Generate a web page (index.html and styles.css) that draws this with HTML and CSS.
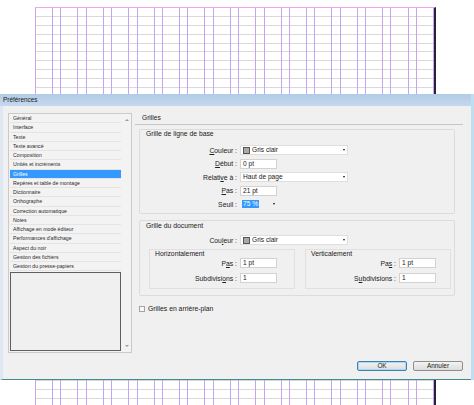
FILE: index.html
```html
<!DOCTYPE html>
<html lang="fr">
<head>
<meta charset="utf-8">
<title>Préférences</title>
<link rel="stylesheet" href="styles.css">
</head>
<body>
<div class="screen">
  <div class="page">
    <div class="col"></div><div class="col"></div><div class="col"></div><div class="col"></div>
    <div class="col"></div><div class="col"></div><div class="col"></div><div class="col"></div>
    <div class="col"></div><div class="col"></div><div class="col"></div><div class="col"></div>
    <div class="col"></div><div class="col"></div><div class="col"></div><div class="col"></div>
  </div>

  <div class="dialog">
    <div class="titlebar">Préférences</div>
    <div class="body">
      <div class="main">
        <div class="list">
          <div class="items">
            <div class="item">Général</div>
            <div class="item">Interface</div>
            <div class="item">Texte</div>
            <div class="item">Texte avancé</div>
            <div class="item">Composition</div>
            <div class="item">Unités et incréments</div>
            <div class="item sel">Grilles</div>
            <div class="item">Repères et table de montage</div>
            <div class="item">Dictionnaire</div>
            <div class="item">Orthographe</div>
            <div class="item">Correction automatique</div>
            <div class="item">Notes</div>
            <div class="item">Affichage en mode éditeur</div>
            <div class="item">Performances d'affichage</div>
            <div class="item">Aspect du noir</div>
            <div class="item">Gestion des fichiers</div>
            <div class="item">Gestion du presse-papiers</div>
            <div class="blank"></div>
          </div>
          <div class="scroll"><span class="arr up"></span><span class="arr down"></span></div>
        </div>

        <div class="panel">
          <div class="panel-head">Grilles</div>

          <div class="group g1">
            <div class="group-label">Grille de ligne de base</div>
            <div class="rows">
              <div class="row">
                <span class="lbl"><u>C</u>ouleur :</span>
                <span class="select wide"><span class="swatch"></span>Gris clair<span class="caret"></span></span>
              </div>
              <div class="row">
                <span class="lbl"><u>D</u>ébut :</span>
                <span class="input">0 pt</span>
              </div>
              <div class="row">
                <span class="lbl">Relati<u>v</u>e à :</span>
                <span class="select wide">Haut de page<span class="caret"></span></span>
              </div>
              <div class="row">
                <span class="lbl"><u>P</u>as :</span>
                <span class="input">21 pt</span>
              </div>
              <div class="row">
                <span class="lbl">Seuil :</span>
                <span class="combo"><span class="hl">75 %</span><span class="caret"></span></span>
              </div>
            </div>
          </div>

          <div class="group g2">
            <div class="group-label">Grille du document</div>
            <div class="row first">
              <span class="lbl">Cou<u>l</u>eur :</span>
              <span class="select wide"><span class="swatch"></span>Gris clair<span class="caret"></span></span>
            </div>
            <div class="subs">
              <div class="sub">
                <div class="sub-label">Horizontalement</div>
                <div class="row">
                  <span class="lbl s">P<u>a</u>s :</span>
                  <span class="input">1 pt</span>
                </div>
                <div class="row">
                  <span class="lbl s">Subdivisi<u>o</u>ns :</span>
                  <span class="input">1</span>
                </div>
              </div>
              <div class="sub">
                <div class="sub-label">Verticalement</div>
                <div class="row">
                  <span class="lbl s">Pa<u>s</u> :</span>
                  <span class="input">1 pt</span>
                </div>
                <div class="row">
                  <span class="lbl s">S<u>u</u>bdivisions :</span>
                  <span class="input">1</span>
                </div>
              </div>
            </div>
          </div>

          <div class="check"><span class="box"></span>Grilles en arrière-plan</div>
        </div>
      </div>

      <div class="footer">
        <span class="btn default">OK</span>
        <span class="btn">Annuler</span>
      </div>
    </div>
  </div>
</div>
</body>
</html>
```
FILE: styles.css
```css
html, body {
  margin: 0;
  background: #ffffff;
  font-family: "Liberation Sans", Arial, sans-serif;
  color: #202020;
}

.screen {
  position: relative;
  width: 474px;
  height: 405px;
  overflow: hidden;
  box-sizing: border-box;
  padding: 7px 0 0 35px;
}

/* page with layout grid */
.page {
  width: 401px;
  height: 398px;
  box-sizing: border-box;
  border-top: 1px solid #f2a4f2;
  border-right: 2px solid #2b2238;
  display: flex;
  gap: 7.3px;
  background: repeating-linear-gradient(to bottom, transparent 0 7.89px, #d9d9d9 7.89px 8.89px);
}

.col {
  flex: 1;
  border-left: 1px solid #c2a6f3;
  border-right: 1px solid #c2a6f3;
}

.col:first-child {
  border-left-color: #cca4f0;
}

/* dialog window */
.dialog {
  position: absolute;
  left: 0;
  top: 94px;
  width: 474px;
  height: 286px;
  box-sizing: border-box;
  border-right: 3px solid #bddff4;
  display: flex;
  flex-direction: column;
}

.titlebar {
  height: 12px;
  background: linear-gradient(#b2cbe5, #c5d9ee);
  font-size: 6.4px;
  line-height: 12px;
  padding-left: 3px;
  color: #1a1a1a;
}

.body {
  flex: 1;
  background: #f0f0f0;
  border-left: 3px solid #dfe8f2;
  border-bottom: 1px solid #3f8b8d;
  display: flex;
  flex-direction: column;
  padding: 7px 8px 8px 5px;
}

.main {
  display: flex;
  gap: 3px;
  height: 240px;
}

/* left list */
.list {
  width: 124px;
  height: 240px;
  box-sizing: border-box;
  border: 1px solid #cacaca;
  background: #f3f3f3;
  display: flex;
}

.items {
  width: 113px;
  box-sizing: border-box;
  padding: 0 1px;
  display: flex;
  flex-direction: column;
}

.item {
  height: 9.25px;
  flex: none;
  box-sizing: border-box;
  border-bottom: 1px solid #e4e4e4;
  font-size: 5.2px;
  line-height: 8.25px;
  padding-left: 3px;
  color: #2a2a2a;
  white-space: nowrap;
}

.item.sel {
  background: #3399ff;
  color: #ffffff;
}

.blank {
  flex: 1;
  margin: 1px 0;
  border: 1px solid #5f5f5f;
  background: #f0f0f0;
}

.scroll {
  flex: 1;
  display: flex;
  flex-direction: column;
  justify-content: space-between;
  align-items: center;
  padding: 5px 0;
}

.arr {
  width: 0;
  height: 0;
  border-left: 2px solid transparent;
  border-right: 2px solid transparent;
}

.arr.up { border-bottom: 2px solid #9c9c9c; }
.arr.down { border-top: 2px solid #9c9c9c; }

/* right panel */
.panel {
  flex: 1;
  display: flex;
  flex-direction: column;
}

.panel-head {
  height: 12px;
  box-sizing: border-box;
  border-bottom: 1px solid #c6c6c6;
  font-size: 6.6px;
  line-height: 9px;
  padding-left: 7px;
}

.group {
  margin: 4px 8px 0 4px;
  border: 1px solid #dcdcdc;
  border-radius: 2px;
}

.group-label {
  font-size: 6.8px;
  line-height: 8px;
  padding-left: 6px;
}

.g1 .rows {
  display: flex;
  flex-direction: column;
  gap: 3.5px;
  margin-top: 7px;
  padding-bottom: 4px;
}

.g2 {
  margin-top: 6px;
  padding-bottom: 6px;
}

.g2 .group-label {
  margin-top: 1px;
}

.row {
  display: flex;
  align-items: center;
  gap: 3px;
  height: 10px;
}

.g2 .row.first {
  margin-top: 5px;
}

.lbl {
  width: 97px;
  text-align: right;
  font-size: 6.8px;
  white-space: nowrap;
}

.lbl.s {
  width: 87px;
}

.sub + .sub .lbl.s {
  width: 90px;
}

.select, .input, .combo {
  height: 10px;
  box-sizing: border-box;
  font-size: 6.6px;
  line-height: 8px;
  display: flex;
  align-items: center;
}

.select {
  background: #ffffff;
  border: 1px solid #dedede;
  padding-left: 2px;
}

.select.wide {
  width: 108px;
}

.input {
  width: 37px;
  background: #ffffff;
  border: 1px solid #d2d2d2;
  padding-left: 2px;
}

.combo {
  width: 37px;
  padding-left: 2px;
}

.hl {
  background: #3399ff;
  color: #ffffff;
  padding: 0 1px;
  line-height: 8px;
}

.swatch {
  width: 5px;
  height: 5px;
  border: 1px solid #555555;
  background: #a9a9a9;
  margin-right: 2px;
}

.caret {
  margin-left: auto;
  margin-right: 2px;
  width: 0;
  height: 0;
  border-left: 1.5px solid transparent;
  border-right: 1.5px solid transparent;
  border-top: 2px solid #111111;
}

.subs {
  display: flex;
  gap: 10px;
  margin-top: 4px;
  padding: 0 0 0 9px;
}

.sub {
  width: 146px;
  box-sizing: border-box;
  border: 1px solid #e0e0e0;
  padding-bottom: 5px;
}

.sub-label {
  font-size: 6.8px;
  line-height: 8px;
  padding-left: 5px;
}

.sub .row + .row {
  margin-top: 5px;
}

.check {
  display: flex;
  align-items: center;
  gap: 3px;
  margin: 9px 0 0 4px;
  font-size: 6.8px;
  height: 7px;
}

.box {
  width: 6px;
  height: 6px;
  box-sizing: border-box;
  border: 1px solid #a4a4a4;
  background: #f7f7f7;
}

/* footer buttons */
.footer {
  margin-top: auto;
  display: flex;
  justify-content: flex-end;
  gap: 6px;
}

.btn {
  width: 50px;
  height: 10px;
  box-sizing: border-box;
  border: 1px solid #8e8e8e;
  border-radius: 2px;
  background: linear-gradient(#f3f3f3, #dddddd);
  font-size: 6.4px;
  line-height: 8px;
  text-align: center;
  color: #202020;
}

.btn.default {
  border-color: #3d81b6;
  box-shadow: inset 0 0 0 1px #a8d8f2;
}
```
